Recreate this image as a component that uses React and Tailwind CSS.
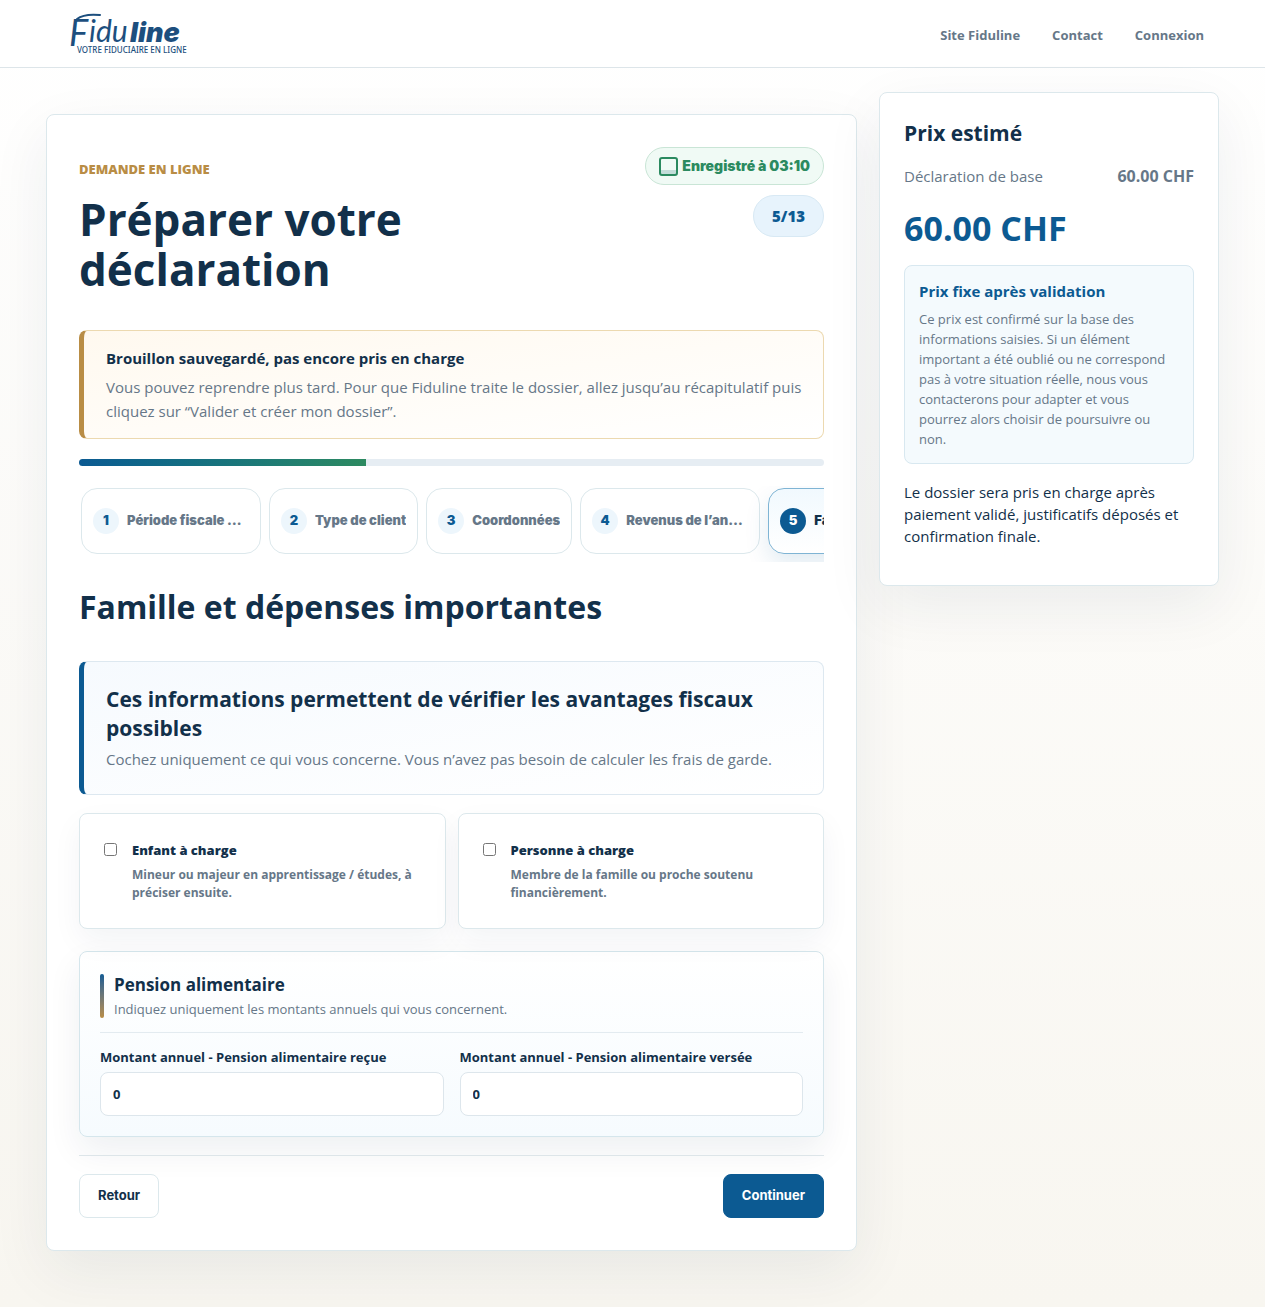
import React, { useState } from 'react';

const STEPS = [
  'Période fiscale et canton',
  'Type de client',
  'Coordonnées',
  'Revenus de l’année',
  'Famille',
];

const CURRENT_STEP = 5;
const TOTAL_STEPS = 13;

const CHOICES = [
  {
    id: 'child',
    title: 'Enfant à charge',
    text: 'Mineur ou majeur en apprentissage / études, à préciser ensuite.',
  },
  {
    id: 'dependent',
    title: 'Personne à charge',
    text: 'Membre de la famille ou proche soutenu financièrement.',
  },
];

const AMOUNTS = [
  { id: 'received', label: 'Montant annuel - Pension alimentaire reçue' },
  { id: 'paid', label: 'Montant annuel - Pension alimentaire versée' },
];

const Logo = () => (
  <a href="#accueil" aria-label="Fiduline" className="block">
    <svg width="120" height="44" viewBox="0 0 120 44" fill="#1d4f7e" className="overflow-visible">
      <path d="M7 7 C12 3 20 2 30 3" fill="none" stroke="#1d4f7e" strokeWidth="2" strokeLinecap="round" />
      <text x="-1" y="34" fontFamily="Lato, sans-serif" fontStyle="italic" fontSize="36">F</text>
      <text x="19" y="30" fontFamily="Lato, sans-serif" fontStyle="italic" fontSize="30">idu</text>
      <text x="60" y="30" fontFamily="Inter, sans-serif" fontStyle="italic" fontWeight="900" fontSize="27">line</text>
      <text x="7" y="41" fontFamily="Noto Sans, sans-serif" fontWeight="500" fontSize="8">VOTRE FIDUCIAIRE EN LIGNE</text>
    </svg>
  </a>
);

const Header = () => (
  <header className="border-b border-[#dde5e9] bg-white">
    <div className="flex h-[67px] items-center justify-between pl-[70px] pr-[61px]">
      <Logo />
      <nav className="flex gap-8 pt-1 text-[13px] font-bold text-[#667788]">
        <a href="#site">Site Fiduline</a>
        <a href="#contact">Contact</a>
        <a href="#connexion">Connexion</a>
      </nav>
    </div>
  </header>
);

const StepList = () => (
  <ol className="mt-5 flex gap-2 overflow-hidden px-0.5 pb-2 pt-0.5">
    {STEPS.map((label, index) => {
      const number = index + 1;
      const active = number === CURRENT_STEP;
      return (
        <li key={label} className="max-w-[180px] shrink-0">
          <button
            type="button"
            className={
              active
                ? 'flex h-[66px] w-full items-center gap-2 rounded-2xl border border-[#7fb4d4] bg-linear-to-b from-[#f1f9fe] to-white px-[11px] text-[#12304a] shadow-[0_10px_24px_rgba(11,91,145,0.12)]'
                : 'flex h-[66px] w-full items-center gap-2 rounded-2xl border border-[#dce8ec] bg-white px-[11px] text-[#667788]'
            }
          >
            <span
              className={
                active
                  ? 'flex size-[26px] shrink-0 items-center justify-center rounded-full bg-[#0c5a92] font-[Inter,sans-serif] text-[13px] font-black text-white'
                  : 'flex size-[26px] shrink-0 items-center justify-center rounded-full bg-[#edf6fc] font-[Inter,sans-serif] text-[13px] font-black text-[#0c5a92]'
              }
            >
              {number}
            </span>
            <span className="max-w-[122px] truncate font-[Inter,sans-serif] text-[13px] font-black">{label}</span>
          </button>
        </li>
      );
    })}
  </ol>
);

const PriceCard = () => (
  <aside className="rounded-lg border border-[#dce8ec] bg-white px-6 pb-[38px] pt-6 shadow-[0_20px_60px_rgba(18,48,74,0.07)]">
    <h2 className="text-[21px] font-bold leading-8">Prix estimé</h2>
    <div className="mt-[15px] flex items-center justify-between text-[15px] leading-6 text-[#667788]">
      <span>Déclaration de base</span>
      <strong className="text-base leading-6">60.00 CHF</strong>
    </div>
    <p className="mt-[17px] text-[34px] font-bold leading-[46px] text-[#0c5a92]">60.00 CHF</p>
    <div className="mt-[14px] rounded-lg border border-[#d8e8f0] bg-[#f4fafd] px-[14px] pb-[14px] pt-[13px]">
      <h3 className="text-[15px] font-bold leading-6 text-[#0c5a92]">Prix fixe après validation</h3>
      <p className="mt-1.5 text-[13px] leading-5 text-[#667788]">
        Ce prix est confirmé sur la base des informations saisies. Si un élément important a été oublié ou ne
        correspond pas à votre situation réelle, nous vous contacterons pour adapter et vous pourrez alors choisir
        de poursuivre ou non.
      </p>
    </div>
    <p className="mt-[17px] text-[15px] leading-[22px]">
      Le dossier sera pris en charge après paiement validé, justificatifs déposés et confirmation finale.
    </p>
  </aside>
);

const App = () => {
  const [checked, setChecked] = useState({ child: false, dependent: false });
  const [amounts, setAmounts] = useState({ received: '0', paid: '0' });

  return (
    <div className="min-h-screen bg-linear-to-b from-white to-[#f8f6f0] font-['Open_Sans',sans-serif] text-[#12304a]">
      <Header />

      <main className="grid grid-cols-[minmax(0,1fr)_340px] items-start gap-[22px] px-[46px] pb-14 pt-6">
        <form
          onSubmit={(e) => e.preventDefault()}
          className="mt-[22px] rounded-lg border border-[#dce8ec] bg-white p-8 shadow-[0_20px_60px_rgba(18,48,74,0.07)]"
        >
          <div className="flex items-start justify-between">
            <div className="max-w-[420px] pt-3">
              <p className="text-[13px] font-extrabold uppercase leading-5 text-[#b98d45]">Demande en ligne</p>
              <h1 className="mt-[15px] text-[44px] font-bold leading-[50px]">Préparer votre déclaration</h1>
            </div>
            <div className="flex flex-col items-end gap-[10px]">
              <span className="flex h-[38px] items-center gap-1 rounded-full border border-[#c9e5d6] bg-[#f0faf5] px-[13px] font-[Inter,sans-serif] text-sm font-black text-[#2b8a60]">
                <svg width="19" height="19" viewBox="0 0 19 19" fill="none">
                  <rect x="2" y="13" width="15" height="4" fill="#c3ddd9" />
                  <rect x="1" y="1" width="17" height="17" rx="2" stroke="#2b8a60" strokeWidth="2" />
                </svg>
                Enregistré à 03:10
              </span>
              <span className="flex h-[42px] items-center rounded-full border border-[#d8e9f4] bg-[#e7f3fc] px-[18px] text-[15px] font-extrabold text-[#0c5a92]">
                {CURRENT_STEP}/{TOTAL_STEPS}
              </span>
            </div>
          </div>

          <div className="mt-9 rounded-lg border border-l-5 border-[#ecd9b0] border-l-[#b98d45] bg-linear-to-br from-[#fff9ef] to-white pb-[15px] pl-[22px] pr-4 pt-4">
            <h2 className="text-[15px] font-bold leading-[22px]">Brouillon sauvegardé, pas encore pris en charge</h2>
            <p className="mt-1.5 text-[15px] leading-6 text-[#667788]">
              Vous pouvez reprendre plus tard. Pour que Fiduline traite le dossier, allez jusqu’au récapitulatif puis
              cliquez sur “Valider et créer mon dossier”.
            </p>
          </div>

          <div className="mt-5 h-[7px] overflow-hidden rounded-full bg-[#e6edf3]">
            <div
              className="h-full bg-linear-to-r from-[#0c5a92] to-[#2d8a60]"
              style={{ width: `${(CURRENT_STEP / TOTAL_STEPS) * 100}%` }}
            />
          </div>

          <StepList />

          <h2 className="mt-5 text-[32px] font-bold leading-[50px]">Famille et dépenses importantes</h2>

          <section className="mt-[29px] rounded-lg border border-l-5 border-[#dde8f0] border-l-[#0c5a92] bg-linear-to-br from-[#f6fafe] to-white px-[22px] py-[23px]">
            <h3 className="text-[21px] font-bold leading-[29px]">
              Ces informations permettent de vérifier les avantages fiscaux possibles
            </h3>
            <p className="mt-1 text-[15px] leading-6 text-[#667788]">
              Cochez uniquement ce qui vous concerne. Vous n’avez pas besoin de calculer les frais de garde.
            </p>
          </section>

          <div className="mt-[18px] grid grid-cols-2 gap-3">
            {CHOICES.map((choice) => (
              <label
                key={choice.id}
                className="flex items-start gap-[15px] rounded-lg border border-[#dce8ec] bg-white px-6 py-[26px] shadow-[0_12px_30px_rgba(18,48,74,0.05)]"
              >
                <input
                  type="checkbox"
                  checked={checked[choice.id]}
                  onChange={(e) => setChecked({ ...checked, [choice.id]: e.target.checked })}
                  className="mt-[3px] size-[13px] shrink-0"
                />
                <span>
                  <span className="block text-[13px] font-extrabold leading-5">{choice.title}</span>
                  <span className="mt-1.5 block text-xs font-bold leading-[18px] text-[#667788]">{choice.text}</span>
                </span>
              </label>
            ))}
          </div>

          <section className="mt-[22px] rounded-lg border border-[#d5e6ec] bg-linear-to-b from-white to-[#f6fbfe] p-5 shadow-[0_14px_34px_rgba(18,48,74,0.07)]">
            <div className="flex gap-[10px] border-b border-[#e3ebf0] pb-[14px] pt-0.5">
              <span className="w-1 rounded-full bg-linear-to-b from-[#0c5a92] to-[#b98d45]" />
              <div>
                <h3 className="text-[17px] font-bold leading-[22px]">Pension alimentaire</h3>
                <p className="mt-1 text-[13px] leading-[18px] text-[#667788]">
                  Indiquez uniquement les montants annuels qui vous concernent.
                </p>
              </div>
            </div>
            <div className="mt-[15px] grid grid-cols-2 gap-4">
              {AMOUNTS.map((field) => (
                <div key={field.id}>
                  <label htmlFor={field.id} className="block text-[13px] font-bold leading-[18px]">
                    {field.label}
                  </label>
                  <input
                    id={field.id}
                    type="text"
                    inputMode="numeric"
                    value={amounts[field.id]}
                    onChange={(e) => setAmounts({ ...amounts, [field.id]: e.target.value })}
                    className="mt-1.5 block h-11 w-full rounded-lg border border-[#dde6ec] bg-white px-3 text-[13px] font-bold"
                  />
                </div>
              ))}
            </div>
          </section>

          <div className="mt-[18px] flex justify-between border-t border-[#dde5e9] pt-[18px]">
            <button
              type="button"
              className="h-11 rounded-lg border border-[#dce8ec] bg-white px-[18px] font-[Inter,sans-serif] text-[13px] font-bold"
            >
              Retour
            </button>
            <button
              type="submit"
              className="h-11 rounded-lg border border-[#0c5a92] bg-[#0c5a92] px-[18px] font-[Inter,sans-serif] text-[13px] font-bold text-white"
            >
              Continuer
            </button>
          </div>
        </form>

        <PriceCard />
      </main>
    </div>
  );
};

export default App;
